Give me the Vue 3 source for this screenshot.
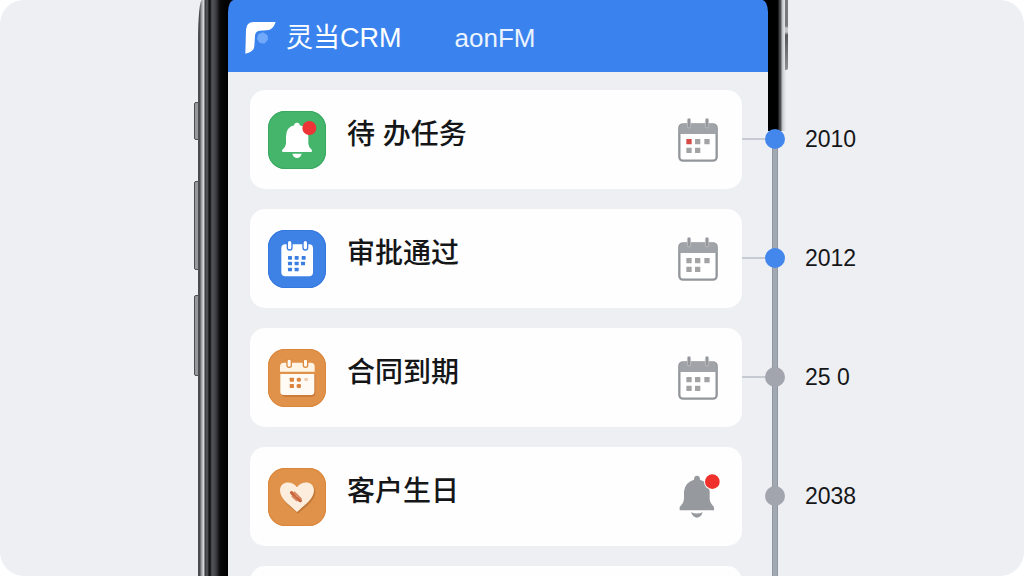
<script setup>
const items = [
  { title: '待 办任务', icon: 'bell', tone: 'green', side: 'calendar', due: true, year: '2010', active: true, linked: true },
  { title: '审批通过', icon: 'calendar', tone: 'blue', side: 'calendar', year: '2012', active: true, linked: true },
  { title: '合同到期', icon: 'contract', tone: 'orange', side: 'calendar', year: '25 0', active: false, linked: true },
  { title: '客户生日', icon: 'heart', tone: 'orange', side: 'bell', year: '2038', active: false, linked: false }
]
const cells = [[33, 71], [59, 71], [87, 71], [33, 97], [59, 97]]
const blueCells = [[66, 83], [86, 83], [107, 83], [66, 100], [86, 100], [105, 100], [66, 118], [86, 118]]
</script>

<template>
  <div class="stage">
    <div class="frame" aria-hidden="true">
      <span class="key key-mute"></span>
      <span class="key key-up"></span>
      <span class="key key-down"></span>
    </div>

    <div class="top">
      <header class="bar">
        <svg class="logo" viewBox="0 0 96 102" aria-hidden="true">
          <path fill="#fff" d="M1 98 L3 26 Q4 4 26 3 H92 Q84 27 66 28 L44 29 Q31 30 30 44 L28 76 Q27 93 1 98Z" />
          <path fill="#70a8fa" d="M40 40 L54 34 L68 43 L69 56 L58 68 L43 65 L36 53Z" />
        </svg>
        <h1 class="brand">灵当CRM</h1>
        <span class="sub">aonFM</span>
      </header>
    </div>
    <div class="edge" aria-hidden="true"><span class="edge-key"></span></div>

    <ul class="list">
      <li v-for="item in items" :key="item.year" class="row">
        <article class="card">
          <svg class="tile" :class="item.tone" viewBox="0 0 174 174" aria-hidden="true">
            <template v-if="item.icon === 'bell'">
              <path fill="#fff" d="M79 43 Q78 35 87 35 Q96 35 95 43 Q120 48 121 76 V98 Q122 109 131 116 Q135 123 126 123 H49 Q39 123 43 116 Q53 108 54 98 V76 Q55 48 79 43Z" />
              <path fill="#fff" d="M73 128 H101 Q97 141 87 141 Q77 141 73 128Z" />
              <circle cx="124" cy="51" r="21" fill="#ef3438" />
            </template>
            <template v-else-if="item.icon === 'calendar'">
              <rect x="40" y="43" width="95" height="96" rx="12" fill="#fff" />
              <g fill="#fff" stroke="#3b7de0" stroke-width="4">
                <rect x="58" y="31" width="14" height="29" rx="7" />
                <rect x="105" y="31" width="14" height="29" rx="7" />
              </g>
              <rect v-for="(c, i) in blueCells" :key="i" :x="c[0] - 6" :y="c[1] - 5" width="12" height="11" rx="2" fill="#3b7de0" />
            </template>
            <template v-else-if="item.icon === 'contract'">
              <path fill="#b9682b" opacity=".6" d="M40 76 H142 V132 Q142 143 131 143 H50 Q40 142 40 132Z" />
              <path fill="#fff4e6" d="M36 68 V53 Q36 41 48 41 H128 Q140 41 140 53 V68Z" />
              <path fill="#fffaf3" d="M37 75 H139 V129 Q139 138 129 138 H47 Q37 138 37 129Z" />
              <g fill="#fffaf3" stroke="#dd8b40" stroke-width="4">
                <rect x="57" y="30" width="13" height="25" rx="6" />
                <rect x="106" y="30" width="13" height="25" rx="6" />
              </g>
              <g fill="#dc8540">
                <rect x="65" y="86" width="13" height="12" rx="2" />
                <rect x="86" y="86" width="13" height="12" rx="5" />
                <rect x="109" y="87" width="11" height="9" rx="3" opacity=".4" />
                <rect x="65" y="105" width="13" height="12" rx="2" />
                <rect x="86" y="105" width="13" height="12" rx="4" />
              </g>
            </template>
            <template v-else>
              <path fill="#a65f25" opacity=".5" d="M90 137 C66 116 39 98 39 71 C39 43 76 40 90 62 C104 40 142 43 142 71 C142 98 113 116 90 137Z" />
              <path fill="#fdeddc" d="M87 132 C64 111 36 93 36 67 C36 39 73 36 87 58 C101 36 138 39 138 67 C138 93 110 111 87 132Z" />
              <path fill="none" stroke="#c9653c" stroke-width="10" stroke-linecap="round" stroke-dasharray="12 3" d="M71 74 L82 88 L97 98" />
              <path fill="none" stroke="#d98560" stroke-width="6" d="M78 72 L100 94 M72 84 L88 98" />
            </template>
          </svg>
          <h2 class="title">{{ item.title }}</h2>
          <svg class="side" viewBox="0 0 120 132" aria-hidden="true">
            <template v-if="item.side === 'calendar'">
              <rect x="4" y="19" width="112" height="109" rx="11" fill="#fff" stroke="#93969b" stroke-width="7" />
              <path fill="#a0a3a7" d="M4 48 V29 Q4 18 15 18 H105 Q116 18 116 29 V48Z" />
              <g fill="#93969b" stroke="#c9cbce" stroke-width="2">
                <rect x="28" y="1" width="10" height="29" rx="5" />
                <rect x="82" y="1" width="10" height="29" rx="5" />
              </g>
              <rect v-for="(c, i) in cells" :key="i" :x="c[0] - 8" :y="c[1] - 8" width="16" height="16" rx="1" :fill="item.due && i === 0 ? '#d94a47' : '#a3a3a5'" />
            </template>
            <template v-else>
              <path fill="#96999d" d="M48 14 Q48 2 57 2 Q66 2 66 14 Q92 22 95 49 V72 Q96 85 108 96 V106 H5 V96 Q17 85 18 72 V49 Q21 22 48 14Z" />
              <path fill="#96999d" d="M39 112 Q57 119 74 112 Q69 128 56 128 Q44 127 39 112Z" />
              <circle cx="103" cy="20" r="25" fill="#fff" />
              <circle cx="103" cy="20" r="22" fill="#f0302b" />
            </template>
          </svg>
        </article>
        <div class="mark">
          <span class="link" :class="{ on: item.linked }"></span>
          <span class="dot" :class="{ active: item.active }"></span>
          <time class="year">{{ item.year }}</time>
        </div>
      </li>
      <li class="row"><article class="card"></article></li>
    </ul>
  </div>
</template>

<style>
html, body { margin: 0; background: #fff; }
</style>

<style scoped>
.stage {
  height: 100vh;
  overflow: hidden;
  border-radius: 24px;
  background: #eeeff3;
  display: grid;
  grid-template-columns: 198fr 30px 514fr 26px 256fr;
  grid-template-rows: 72px 1fr;
  font-family: "Liberation Sans", "Noto Sans CJK SC", sans-serif;
  color: #151618;
}
.frame {
  grid-column: 2;
  grid-row: 1 / 3;
  position: relative;
  border-top-left-radius: 4px 40px;
  background: linear-gradient(90deg, #4a4b4e 0 2px, #96989b 3px, #9fa1a4 4px, #d5d6d9 5px 6px, #303134 7px, #5c5d61 9px, #17181a 11px, #0d0d0f 12px, #55565b 14px, #3c3d41 18px, #08080a 22px, #000 30px);
}
.key {
  position: absolute;
  left: -4px;
  width: 5px;
  box-sizing: border-box;
  border: 1px solid #4c4e52;
  border-radius: 2px 0 0 2px;
  background: #95989c;
}
.key-mute { top: 102px; height: 38px; }
.key-up { top: 181px; height: 89px; }
.key-down { top: 295px; height: 81px; }
.top { grid-column: 3 / 5; grid-row: 1; background: linear-gradient(#000 50%, transparent 50%); }
.bar {
  height: 72px;
  box-sizing: border-box;
  padding: 4px 17px 0;
  display: flex;
  align-items: center;
  background: #3a83ee;
  border-radius: 6px 6px 0 0 / 12px 12px 0 0;
  color: #fff;
}
.logo { width: 32px; height: 34px; flex: none; }
.brand { margin: 0 0 0 9px; font-size: 27px; line-height: 36px; font-weight: 400; white-space: nowrap; }
.sub { margin-left: 53px; font-size: 26px; line-height: 36px; color: #eaf3ff; }
.edge {
  grid-column: 5;
  grid-row: 1;
  position: relative;
  width: 18px;
  height: 131px;
  background: linear-gradient(90deg, #000 0 10px, #3a3a3c 11px, #55565a 13px, #b9bbbf 14px, #dcdde1 16px, #e9eaee 18px);
}
.edge-key {
  position: absolute;
  top: 0;
  left: 17px;
  width: 3px;
  height: 70px;
  border-radius: 0 0 2px 0;
  background: linear-gradient(#77797d 0 26px, #c2c4c7 28px 32px, #55575a 35px, #8d8f92 100%);
}
.list {
  grid-column: 3 / 6;
  grid-row: 2;
  margin: 0;
  padding: 18px 0 0;
  list-style: none;
  display: grid;
  grid-template-columns: subgrid;
  row-gap: 20px;
  align-content: start;
}
.row { grid-column: 1 / -1; display: grid; grid-template-columns: subgrid; position: relative; }
.card {
  margin-left: 22px;
  min-height: 99px;
  box-sizing: border-box;
  padding: 0 24px 0 18px;
  border-radius: 15px;
  background: #fefefe;
  display: flex;
  align-items: center;
}
.tile { width: 58px; height: 58px; flex: none; border-radius: 17px; }
.green { background: #45b56c; box-shadow: inset 0 0 0 1px #39a861; }
.blue { background: #3f82e6; box-shadow: inset 0 0 0 1px #3478df; }
.orange { background: #e0924a; box-shadow: inset 0 0 0 1px #da873c; }
.title { margin: 0 auto 0 21px; padding-bottom: 10px; font-size: 28px; line-height: 36px; font-weight: 500; white-space: nowrap; }
.side { width: 40px; height: 44px; flex: none; overflow: visible; }
.mark {
  grid-column: 2 / 4;
  position: relative;
  display: flex;
  align-items: center;
  padding-bottom: 2px;
}
.mark::before {
  content: "";
  position: absolute;
  left: 30px;
  top: 50%;
  height: 120px;
  width: 6px;
  box-sizing: border-box;
  border: solid #8f98a3;
  border-width: 0 1px;
  background: #a2a8b1;
}
.link { width: 23px; height: 2px; flex: none; }
.link.on { background: #c5cad3; }
.dot { position: relative; width: 20px; height: 20px; flex: none; border-radius: 50%; background: #a2a5ae; }
.dot.active { background: #4387ed; }
.year { margin-left: 20px; font-size: 23px; line-height: 28px; white-space: nowrap; }
</style>
